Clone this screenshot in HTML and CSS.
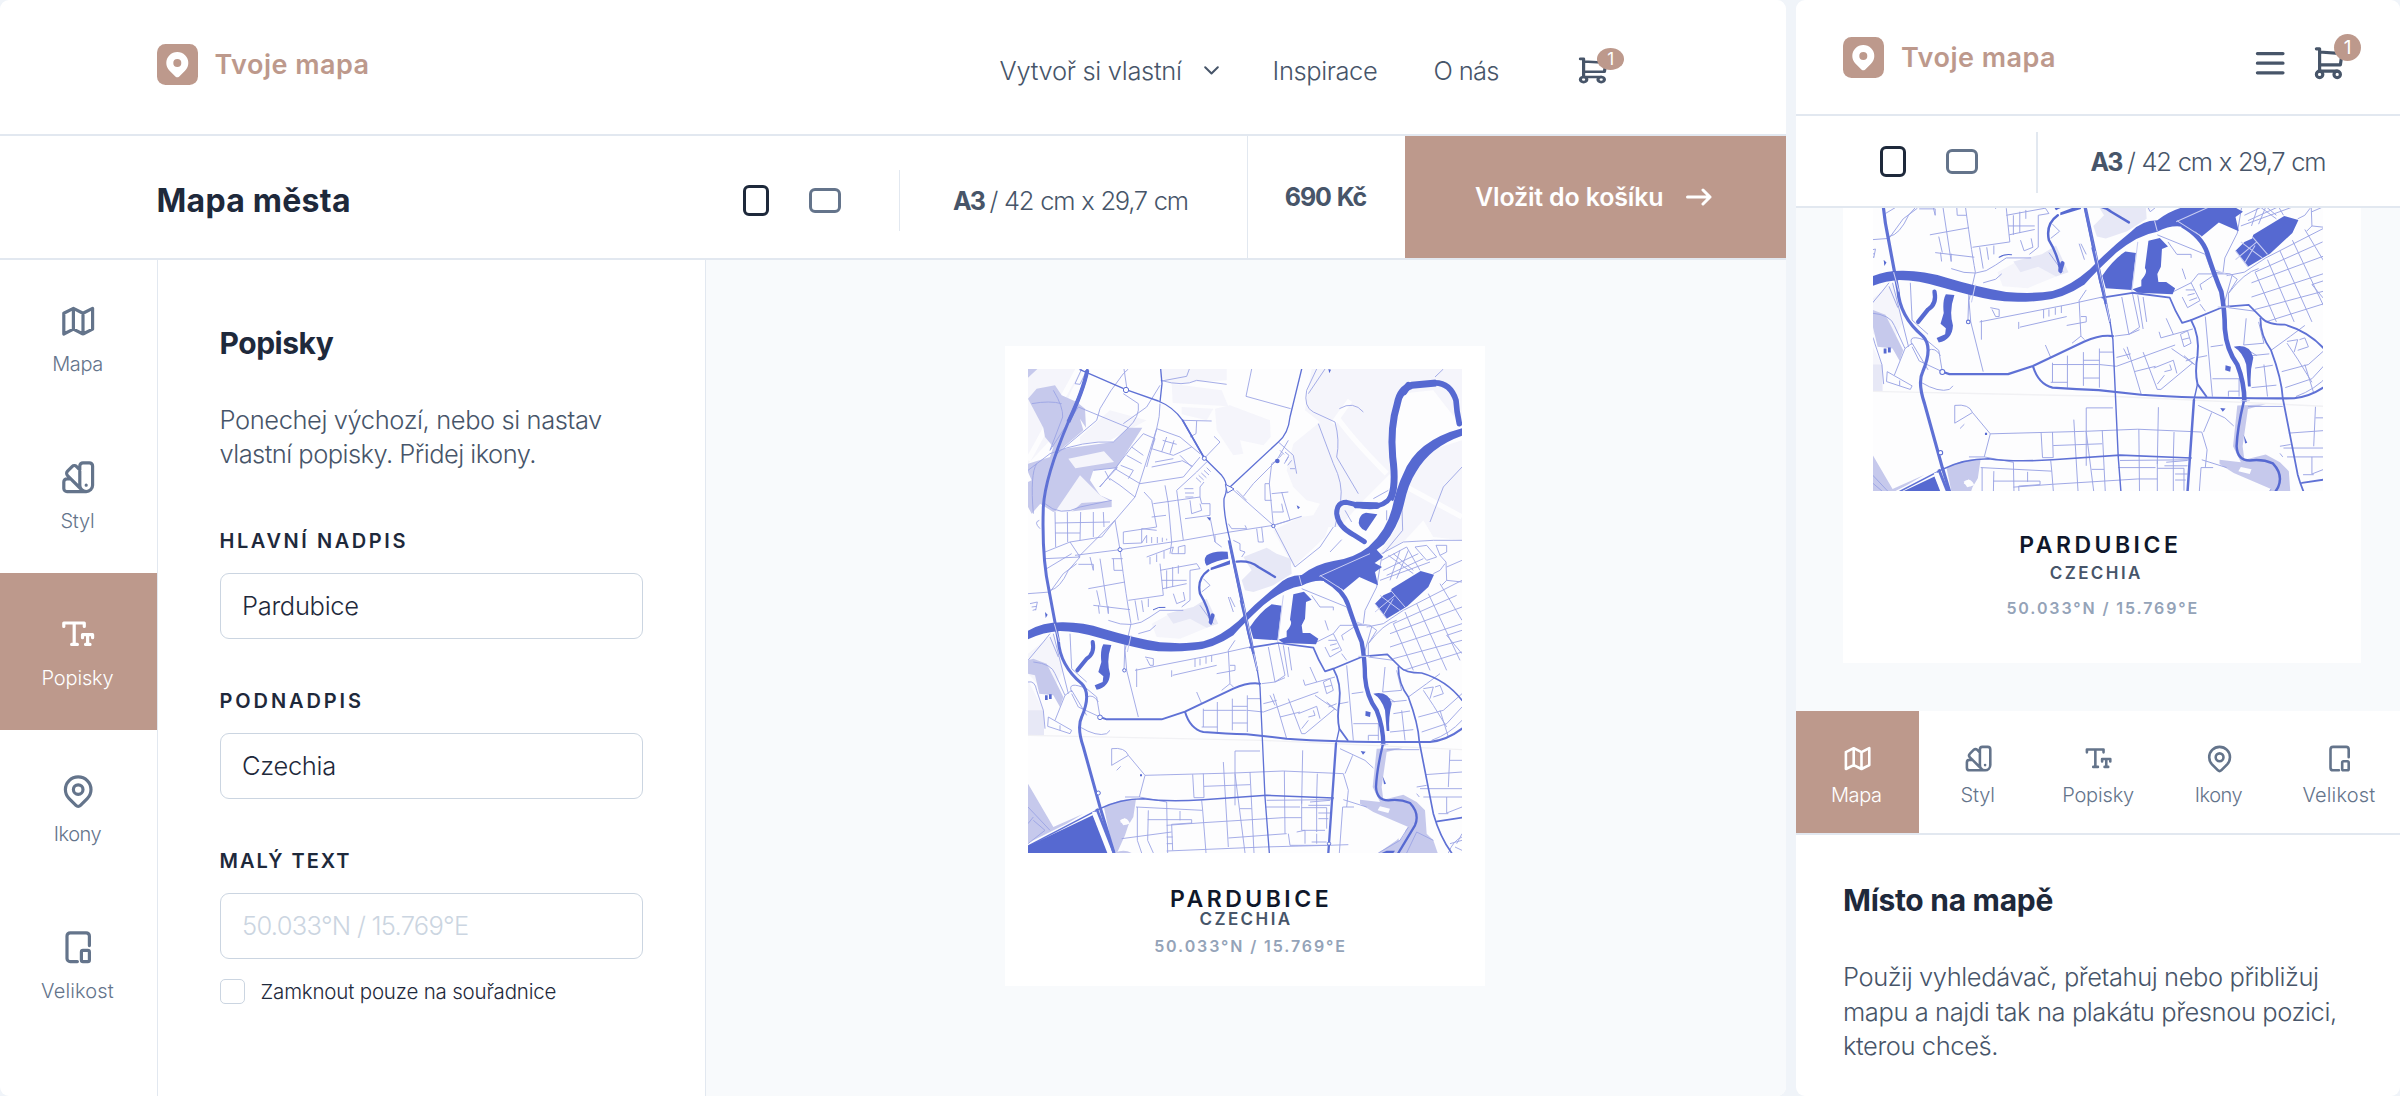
FILE: index.html
```html
<!DOCTYPE html>
<html lang="cs">
<head>
<meta charset="utf-8">
<title>Tvoje mapa</title>
<link rel="stylesheet" href="styles.css">
</head>
<body>
<svg class="defs" width="0" height="0" aria-hidden="true">
  <symbol id="i-logo" viewBox="0 0 41 41"><rect width="41" height="41" rx="8.5" fill="#bd998c"/><path fill="#fff" fill-rule="evenodd" d="M18.6 32.7 12.6 26.8A11 11 0 1 1 28 26.8L22 32.7Q20.3 34 18.6 32.7ZM20.3 15a4 4 0 1 0 0 8a4 4 0 1 0 0-8Z"/></symbol>
  <symbol id="i-map" viewBox="0 0 24 24"><path d="M3 7l6-3 6 3 6-3v13l-6 3-6-3-6 3V7M9 4v13M15 7v13"/></symbol>
  <symbol id="i-style" viewBox="0 0 24 24"><path d="M19 3h-4a2 2 0 0 0-2 2v12a4 4 0 0 0 8 0V5a2 2 0 0 0-2-2M13 7.35l-2-2a2 2 0 0 0-2.828 0L5.344 8.178a2 2 0 0 0 0 2.828l9 9M7.3 13H5a2 2 0 0 0-2 2v4a2 2 0 0 0 2 2h12M17 17v.01"/></symbol>
  <symbol id="i-text" viewBox="0 0 24 24"><path d="M3 7.2V5h12.8v2.2M9.5 5v13.4M7.9 18.4h3.6M14.7 14.2V12.3h6.3v1.9M17.9 12.3v6.1M16.6 18.4h2.8"/></symbol>
  <symbol id="i-pin" viewBox="0 0 24 24"><circle cx="12" cy="11" r="3"/><path d="M17.657 16.657l-4.243 4.243a2 2 0 0 1-2.827 0l-4.244-4.243a8 8 0 1 1 11.314 0z"/></symbol>
  <symbol id="i-size" viewBox="0 0 24 24"><path d="M19 11V5a2 2 0 0 0-2-2H7a2 2 0 0 0-2 2v14a2 2 0 0 0 2 2h4.500M15 14h3a1 1 0 0 1 1 1v5a1 1 0 0 1-1 1h-3a1 1 0 0 1-1-1v-5a1 1 0 0 1 1-1z"/></symbol>
  <symbol id="i-cart" viewBox="0 0 24 24" preserveAspectRatio="none"><circle cx="6" cy="19" r="2"/><circle cx="17" cy="19" r="2"/><path d="M17 17H6V3H4M6 5l14 1-1 7H6"/></symbol>
  <symbol id="i-menu" viewBox="0 0 24 24"><path d="M4 6h16M4 12h16M4 18h16"/></symbol>

  <symbol id="city" viewBox="84 86 1302 1452" preserveAspectRatio="none" overflow="visible">
    <rect x="84" y="86" width="1302" height="1452" fill="#fdfdfe"/>
    <g fill="#f5f5fb">
      <path d="M84 86H250L215 150L150 300L84 370Z"/>
      <path d="M515 130L680 120V86H480V110ZM515 130L665 150L685 198L518 188ZM645 205L690 195L810 240L812 290L790 315L720 300L730 340L700 345L650 270Z"/>
      <path d="M545 200L640 205L620 240L545 222Z"/>
      <path d="M935 86H1386V260L1300 150L1200 160L1170 300V400L1080 490L1020 560L985 560L975 590L880 680L820 570L900 530L940 525L960 490L920 480L880 440L860 390L880 310L960 245L915 210Z"/>
      <path d="M1386 300V600L1300 590L1270 540L1215 600L1130 650L1190 560L1230 400L1290 330Z"/>
      <path d="M84 940L160 880L190 990L150 1070L84 1000ZM240 290L330 210L440 240L330 300L240 310ZM84 1020L130 1110V1180H84Z"/>
      <path d="M455 850L520 815L620 790L650 850L540 895L470 890Z"/>
    </g>
    <path d="M1010 230Q1060 300 1160 400M1220 440L1386 530M84 360L235 86M1000 250L1050 180" fill="none" stroke="#fdfdfe" stroke-width="16"/>
    <g fill="#c6c9ec">
      <path d="M84 86H112L84 112ZM84 175L110 145L165 135L185 165L230 185L255 205L258 262L240 235L250 270L180 330L150 400L180 480L240 405L300 465L335 480V500L200 515L165 515L130 480L95 520L84 500V425L95 420L84 395V370L150 350L160 320L135 290L130 262Z"/>
      <path d="M160 330L340 305L385 262L427 262L350 382L280 390L270 420L300 465L220 480L160 515L120 490Z"/>
      <path d="M84 960L100 955L140 970L165 1020L190 1070L180 1100L160 1065L118 1060L105 1005L84 1000Z"/>
      <path d="M84 1330L160 1460L250 1420L200 1450L84 1508ZM312 1402Q350 1375 408 1375L400 1430L385 1455L375 1485L352 1536H340ZM375 1433l-15 12 20 8ZM345 1538Q370 1525 395 1538Z"/>
      <path d="M1130 1225L1210 1222L1160 1235L1145 1340L1150 1378L1210 1363L1250 1385L1275 1410L1280 1480L1300 1500L1313 1538H1135L1190 1500L1225 1460L1120 1415L1080 1390V1378L1140 1385L1118 1340Z"/>
    </g>
    <path d="M205 355L312 333L342 365L226 384ZM165 515L240 405L300 465L330 482L245 488L215 515Z" fill="#f5f5fb"/>
    <path d="M1140 1398L1170 1405L1165 1418L1133 1410ZM1215 1457q8 20-18 45l-3-12ZM360 1440q20-15 30 10l-20 5Z" fill="#fdfdfe"/>
    <g fill="#e7e8f6">
      <path d="M730 650L800 622L830 640L872 655L875 700L820 735L760 755L735 750L725 720L755 690Z"/>
      <path d="M500 820L580 800L620 775L655 850L620 862L570 835L520 850ZM84 1110H132V1185H84Z"/>
    </g>

    <!-- streets -->
    <g fill="none" stroke="#9ba4e4" stroke-width="2.700" stroke-linejoin="round">
      <path d="M245 86L225 130L240 132L262 86M160 150Q190 200 188 230L150 330M95 190Q150 180 185 190M290 240L300 205Q330 150 370 100L385 86M372 86L380 140M370 160L415 190Q420 230 385 262L235 200L150 330M480 135L440 200L370 250M84 390L150 340Q250 300 340 305L385 262M290 240L165 345M100 520Q90 400 110 370M135 490Q180 530 240 500L335 480"/>
      <path d="M482 120Q550 140 590 120L680 132M568 86L560 108L485 122M755 86L738 168L872 205M950 86L920 150Q910 200 940 215L1005 245Q1020 300 1010 350L1075 460M955 250L1000 370Q1030 430 1022 480M1018 205Q1060 180 1090 215M975 86L925 160M1330 86L1305 110M1386 380L1330 440L1290 545M1120 475L1165 450"/>
      <path d="M480 190Q480 230 470 265L415 440L405 470L345 540L235 650M470 265L540 290L600 340M470 265L455 325L440 380M430 280L465 295L455 325L520 345L575 320M430 280L395 320L345 385L300 440M345 385L420 430L550 410L600 350M405 470L360 435L330 415M395 320L430 345M380 345L425 370M362 375L400 390L385 415M500 290L485 335M522 300L510 340M488 300L530 312M545 362L455 380M540 345L575 380M465 365L520 355M550 240L635 242M590 242L588 280L570 290M615 352L660 305L642 288M280 390L352 382L298 440M315 392L330 420"/>
      <path d="M432 455L455 480L470 560L370 575V610L425 608V565L470 570M460 490L530 480L600 470V440L612 425M495 435L505 490L515 605M530 450L550 600M455 530L498 525M553 445H580M555 458H582M556 470H580M570 480L575 520L605 510L600 490M555 535L630 525V490H605L600 470M530 450L590 395L620 365M588 412l15 14M596 405l15 14M604 398l15 14M612 390l15 14M620 382l12 12M545 360L578 378M630 530L645 605L665 620M645 605V585"/>
      <path d="M165 515L167 620M202 515L203 605M242 515L240 600M280 515V590M310 515L312 560M165 548L330 545M165 578H240M135 635L210 605L305 590L345 540M135 655L240 650L205 690Q180 745 150 750M210 605L240 650M140 685L215 640M84 760L150 755L190 700L230 670M118 540Q100 545 120 565M345 540L360 628Q380 780 393 850L375 930L380 990L415 1130M225 645L360 628L550 600L690 575L820 555L905 528M425 608L440 585V608M455 590V608M472 590V608M487 592V605M500 595V600"/>
      <path d="M235 672H280V690L270 650M300 655L325 820M335 655H368M340 655L342 690H368M265 745L375 725M280 795L390 808M295 795L298 820M325 820V798M385 780L490 765L480 670M440 650L520 620L515 640H555V615L535 620V640M450 650V672M470 642V665M492 632V655M515 605L510 640M480 690L590 670L600 685L570 690V780L545 800M485 720H560M488 745L560 730M500 690V745M518 680V740M535 675V700M405 780L415 840M425 780L430 815M445 775V800M520 760L530 790L555 780L550 755M325 840Q400 870 450 830L480 810L550 810M415 880L450 870L467 855M290 750L300 795"/>
      <path d="M610 715L630 735L605 755M685 550L695 565H740L735 555M700 600L720 610V630L735 635L725 650M770 565L775 605H790L785 560M600 795L640 850M685 770L700 815M690 770L705 800"/>
      <path d="M690 440L820 555L885 680M730 468L760 430L830 360M830 360L815 370L808 430L820 555M808 430H795V480H815M815 460L865 455M845 455L870 540L820 555M818 515H850L845 490M835 305L880 345L890 400M840 330l12 12M848 340l-10 12M855 335l12 10-10 18M865 350l-12 20M875 360l-12 15M870 385h15M865 300L830 360M710 450L740 480"/>
      <path d="M885 680L960 620L1000 560M990 635L1025 598M1022 480L1005 560M1205 470L1208 570L1150 640M1145 640L1210 605L1300 600L1386 600M1035 510L1055 545M1160 510V540"/>
      <path d="M1145 660L1220 620L1260 690M1165 645L1240 700M1150 690L1255 640M1160 705L1270 655M1140 720L1290 665M1180 640L1240 690M1200 630L1170 720M1225 630L1190 715M1245 620L1280 615L1310 650L1280 660ZM1308 615H1340V635L1320 645ZM1320 645L1338 665L1340 720L1325 735M1386 660L1340 680M1145 650L1130 740L1095 810L1090 850M1300 700L1320 690L1335 670"/>
      <path d="M1210 810L1386 720M1180 850L1370 765M1170 880L1386 800M1170 920L1386 850M1180 955L1386 900M1210 990L1386 935M1180 850L1240 990M1215 815L1290 990M1250 790L1340 990M1285 760L1380 960M1320 730L1386 840M1386 725L1340 720M1386 940L1340 885L1386 870M1100 860L1150 850L1210 810M1105 910Q1150 850 1190 840M1060 850L1110 855L1130 870L1105 910V950L1180 960M1115 860L1090 950"/>
      <path d="M905 745L1040 800L1062 860L1025 885L1030 900M935 765L960 800L1000 800V810M975 840L985 870M950 905L1000 880L1025 930L990 950L975 920M1000 880L1020 855L1100 855M1025 940L1040 960M985 900l25 0M990 915l20-5M995 930l22-8"/>
      <path d="M405 990L660 940L750 920M440 955L450 975H460V955L435 950M518 1005L650 975M585 955V980M600 955V975M618 950V970M635 945V965M515 990V1010M705 900L685 930L690 1030L665 1050M650 1000L705 990V975H690M690 1030L700 1040M410 985V1040M375 900L372 990"/>
      <path d="M805 920L825 1025M835 910L855 1005L825 1025M850 915L865 1010M865 920L875 990M785 1030L825 1025L855 1012M590 1055L605 1090M610 1105V1160M652 1085V1175M697 1075V1170M742 1065V1175M610 1110H740M697 1098H742M742 1075H780M605 1160H652M697 1148H742M742 1110L790 1115L955 1055M820 1060L860 1195M790 1090L830 1080M810 1065L825 1095M840 1130L900 1115M865 1075L905 1180L915 1180L1005 1105M895 1120L950 1098L960 1135M905 1165L925 1140M925 1130L945 1125L940 1110M910 1018L915 1035L1005 1010M930 980L950 1025M970 1025L990 1015L1000 1050L980 1060ZM975 1040L995 1035M980 1085L1010 1110M985 1100L1010 1090M945 1065L1010 1110"/>
      <path d="M1040 975L1060 1200M1055 1060L1090 1055M1060 1150H1135V1200M1105 1200V1185H1135M1020 1090L1045 1085M1155 980L1148 1055L1205 1050M1170 1085L1220 1080M1180 1120L1230 1112M1170 1175L1240 1168M1205 1110L1215 1200M1145 1060L1185 1085M1190 990L1205 1050M1295 1200Q1350 1180 1386 1140M1255 1130L1330 1110L1386 1060M1225 1070L1280 1030L1320 1000M1265 1175L1340 1150L1386 1100M1270 1050L1300 1095L1340 1160M1270 1045L1300 1040L1290 1075M1305 1040L1320 1035L1330 1060L1300 1070M1320 1110L1345 1190"/>
      <path d="M84 960L130 905L150 880M100 965Q155 970 165 1000L195 1065L165 1140M150 890L175 950M84 1025Q105 1020 110 1050L130 1110L135 1165M145 1130L215 1170L210 1180L143 1158ZM195 1065L215 1050L260 1125M215 1055Q200 1020 260 1045L290 1070L300 1130M260 1070Q280 1060 295 1085M215 1060L235 1100L300 1130M240 1160Q290 1190 320 1180L330 1170M210 880L215 985L260 1025M160 880L205 1060M180 1155V1170"/>
      <path d="M335 1225Q375 1220 385 1245L435 1305L418 1370L375 1370M335 1225V1275L385 1245M350 1290L362 1278M435 1305L700 1298L850 1292L1030 1300L1045 1350L1040 1400M418 1370L500 1385M578 1302L582 1372H612L610 1300M612 1338L750 1333M670 1265L685 1520M705 1395V1232H780M705 1300L735 1538M750 1295L762 1538M853 1292L855 1480M908 1230L905 1390M952 1300L950 1370M1020 1225L1095 1260L1120 1283M1058 1245L1035 1300"/>
      <path d="M408 1400L608 1410L605 1380M412 1400V1500L425 1538M445 1410L443 1500L460 1538M500 1385L503 1538M540 1412V1440M443 1438H575V1448L515 1452L518 1530M365 1495L515 1475M500 1455L610 1447L850 1432H905M608 1410L618 1538M720 1405H755M685 1493L860 1480M795 1400H900M800 1380L1000 1378M865 1480L870 1515H980M905 1380V1470H975M925 1395H990M930 1385L990 1380M905 1402H980V1465M950 1370V1475M955 1418H990M955 1435H985M890 1475L915 1470V1510M935 1505H980M950 1480V1510M500 1532L790 1520L985 1515L1045 1513M518 1490H500M518 1510H500M1028 1400L1018 1538M1028 1400H1062M1030 1378L1100 1400"/>
      <path d="M1160 1228H1258M1260 1345H1386M1270 1370H1386M1275 1303L1386 1295M1350 1228L1345 1340M1350 1260H1386M1340 1370V1418L1386 1400M1315 1420H1345M1250 1340L1280 1335M1250 1360l8 10M1250 1475L1220 1538M1250 1475L1300 1500M1225 1460L1200 1500L1135 1538M1345 1538Q1360 1500 1386 1490M1365 1520L1386 1530M1350 1510L1386 1500M1386 1480L1370 1510M90 790l22-5-5 25M95 800l15-2M98 810l10-3M100 1440L135 1470L84 1510M84 1400L150 1470M84 1450L100 1430"/>
    </g>
    <path d="M84 1185L790 1200L1386 1228" fill="none" stroke="#f1f1f4" stroke-width="4"/>

    <!-- main roads -->
    <g fill="none" stroke="#5f71d5" stroke-linejoin="round" stroke-linecap="round">
      <path stroke-width="4" d="M240 88L378 148L475 182Q520 200 548 240L612 352L665 405Q690 435 672 475Q670 520 690 600L755 900L772 990L780 1040L795 1370L808 1538M905 86L870 230Q865 280 835 305L690 440M482 86L486 130L480 185"/>
      <path stroke-width="5.500" d="M690 615L745 880L772 990M548 240L612 352"/>
      <path stroke-width="5" d="M750 922L835 908L940 922Q955 960 975 993L1000 985L1090 948L1162 942L1200 980Q1215 998 1265 998Q1340 1020 1386 1080"/>
      <path stroke-width="5.500" d="M1000 985Q1025 1030 1018 1085Q1010 1130 1018 1165L1043 1200"/>
      <path stroke-width="5" d="M1195 980Q1195 1030 1225 1070Q1255 1150 1258 1205L1300 1420Q1320 1490 1355 1538M1312 1443L1386 1432"/>
      <path stroke-width="6" d="M300 1130L320 1137H485L555 1114L700 1045Q745 1025 780 1030M555 1114Q570 1165 610 1175Q680 1180 740 1182L860 1195Q1000 1206 1290 1205Q1340 1200 1386 1165"/>
      <path stroke-width="4.500" d="M84 1517L300 1405Q360 1375 430 1375Q500 1385 610 1378L800 1365L1000 1373"/>
      <path stroke-width="7" d="M1008 1210L985 1538"/>
      <path stroke-width="4" d="M1018 1165L1008 1210"/>
      <path stroke-width="9" d="M262 90Q250 150 205 245Q135 410 130 500Q125 650 147 750L175 900Q180 975 245 1030Q275 1060 245 1130Q230 1160 250 1220L300 1400L342 1538"/>
    </g>
    <path d="M262 90Q250 150 205 245" fill="none" stroke="#5f71d5" stroke-width="12"/>
    <g fill="#fdfdfe" stroke="#5f71d5" stroke-width="3">
      <circle cx="378" cy="149" r="8"/><circle cx="613" cy="354" r="6"/><circle cx="300" cy="1131" r="7"/><circle cx="295" cy="1358" r="6"/><circle cx="360" cy="628" r="6"/><circle cx="820" cy="557" r="5"/><circle cx="373" cy="990" r="5"/><circle cx="987" cy="1510" r="5"/><path d="M676 432L692 440L702 446L682 458Z"/>
    </g>

    <!-- river, lakes and ponds -->
    <g fill="#5669d1">
      <path d="M84 871Q130 845 190 846Q250 846 310 865Q400 892 480 906Q560 912 610 903Q660 890 715 842Q770 785 830 737Q860 705 905 704Q945 672 1000 662Q1060 655 1105 620Q1160 570 1176 505Q1190 440 1210 400Q1250 300 1386 264V286Q1290 320 1248 395Q1225 430 1212 490Q1195 560 1152 612L1130 628L1150 650L1124 668L1146 680L1125 695L1134 735L1078 710L1030 750Q975 700 905 736Q850 745 790 795Q730 850 700 885Q640 925 580 930Q500 938 440 928Q380 916 300 893Q230 872 180 872Q130 875 84 897Z"/>
      <path d="M760 895L750 860Q780 815 815 792L845 796L833 900ZM880 762L912 754L935 778L918 785L915 835L905 855L908 878H930L955 895L948 912L850 908L835 898L860 890V872Q880 850 870 838Z"/>
      <path d="M1175 745L1262 692L1302 703L1285 740L1222 798L1160 835L1125 790L1150 765L1172 755Z"/>
      <path d="M1098 517L1132 522L1098 572Q1070 560 1078 535Q1084 519 1098 517ZM1120 1060Q1165 1050 1175 1090Q1165 1130 1168 1172H1160L1155 1110Q1145 1075 1120 1060Z"/>
      <path d="M84 1517L278 1425L322 1538H84Z"/>
      <path d="M620 645Q640 630 683 634L685 655Q650 660 620 676Q608 660 620 645ZM632 682L690 660V672L632 690Z"/>
      <path d="M310 912L334 914Q318 960 330 1000Q328 1040 290 1048L284 1035L308 1025L310 1008L295 995L304 965Q300 930 310 912ZM135 1065h8v14h-8zM147 1062h8v14h-8zM1097 1112l15 4-2 14-14-4zM1082 1232l15 2-8 9zM1148 1308l10 22-6 2zM1145 1538l15-7h25l-5 7zM985 86l8 2-5 11zM620 530l12 2-3 9zM135 815l8 8-6 10zM420 1302h6v6h-6zM890 495l10 6-6 6z"/>
      <circle cx="832" cy="362" r="7"/>
    </g>
    <g fill="none" stroke="#5669d1" stroke-linecap="round" stroke-linejoin="round">
      <path stroke-width="17" d="M1378 250Q1370 215 1368 180Q1350 125 1300 128"/>
      <path stroke-width="21" stroke-linecap="butt" d="M1308 128L1235 135Q1200 145 1192 190Q1170 260 1178 350Q1190 440 1170 478"/>
      <path stroke-width="15" d="M1172 470Q1150 505 1090 498L1040 486Q1010 485 1010 520Q1015 560 1060 583L1093 604"/>
      <path stroke-width="20" d="M1225 135L1212 155M1130 496L1070 494"/>
      <path stroke-width="7" d="M625 690Q590 715 600 760Q625 800 633 850M710 664Q750 660 775 680L825 710"/>
      <path stroke-width="12" d="M638 825L632 845"/>
      <path stroke-width="12" d="M278 905Q285 940 260 955L232 990"/>
      <path stroke-width="13" stroke-linecap="butt" d="M975 718Q1030 750 1045 795Q1070 870 1085 905Q1095 960 1095 1010Q1100 1070 1130 1110Q1150 1160 1150 1215"/>
      <path stroke-width="7" d="M1148 1215Q1130 1290 1128 1340Q1130 1380 1165 1380Q1200 1375 1230 1388Q1260 1420 1245 1455L1195 1538"/>
      <path stroke-width="3" d="M460 808Q475 798 495 801"/>
    </g>
    <path d="M730 790L772 990M960 705L1030 750M850 765L833 905M897 705L905 735M163 850L178 905M393 885L382 935M1125 790L1160 835M1140 765L1200 810M1125 815L1185 765M1172 750L1215 800M1150 825L1180 775M958 708L1110 640M1075 948H1110M1140 1212H1165M1110 860L1070 845" fill="none" stroke="#c9cdf2" stroke-width="3"/>
    <path d="M280 1415L330 1538" fill="none" stroke="#fdfdfe" stroke-width="9"/>
    <path d="M290 1405L342 1538" fill="none" stroke="#5f71d5" stroke-width="8"/>
    <path d="M686 600L745 880M722 780L760 940" fill="none" stroke="#5f71d5" stroke-width="6"/>
  </symbol>
</svg>

<main class="frame desktop">
  <header class="header">
    <a class="logo"><svg class="logo-mark"><use href="#i-logo"/></svg><span class="brand">Tvoje mapa</span></a>
    <nav class="nav">
      <a class="n1">Vytvoř si vlastní <svg class="chevron" viewBox="0 0 15 9"><path d="M1.200 1.200 7.500 7.500l6.300-6.300"/></svg></a>
      <a class="n2">Inspirace</a>
      <a class="n3">O nás</a>
    </nav>
    <span class="cart"><svg class="ico"><use href="#i-cart"/></svg><b class="badge">1</b></span>
  </header>
  <div class="toolbar">
    <h1 class="heading">Mapa města</h1>
    <div class="orient"><i class="portrait"></i><i class="landscape"></i></div>
    <i class="sep"></i>
    <div class="size"><b class="a3">A3</b><span class="dims">/ 42 cm x 29,7 cm</span></div>
    <strong class="price">690 Kč</strong>
    <button class="buy"><span class="buy-text">Vložit do košíku</span><svg class="arrow" viewBox="0 0 26 18"><path d="M1.500 9H24M17 2l7 7-7 7"/></svg></button>
  </div>
  <div class="work">
    <nav class="side">
      <a class="item"><svg class="ico"><use href="#i-map"/></svg><span class="t1">Mapa</span></a>
      <a class="item"><svg class="ico"><use href="#i-style"/></svg><span class="t2">Styl</span></a>
      <a class="item active"><svg class="ico"><use href="#i-text"/></svg><span class="t3">Popisky</span></a>
      <a class="item"><svg class="ico"><use href="#i-pin"/></svg><span class="t4">Ikony</span></a>
      <a class="item"><svg class="ico"><use href="#i-size"/></svg><span class="t5">Velikost</span></a>
    </nav>
    <section class="panel">
      <h2 class="title title-popisky">Popisky</h2>
      <p class="lead">Ponechej výchozí, nebo si nastav<br><span class="lead-2">vlastní popisky. Přidej ikony.</span></p>
      <div class="field"><label class="label l1">HLAVNÍ NADPIS</label><div class="input">Pardubice</div></div>
      <div class="field"><label class="label l2">PODNADPIS</label><div class="input">Czechia</div></div>
      <div class="field"><label class="label l3">MALÝ TEXT</label><div class="input placeholder">50.033°N / 15.769°E</div></div>
      <div class="check"><i class="box"></i><span>Zamknout pouze na souřadnice</span></div>
    </section>
    <section class="canvas">
      <article class="poster">
        <svg class="poster-map"><use href="#city"/></svg>
        <div class="city">PARDUBICE</div>
        <div class="country">CZECHIA</div>
        <div class="coords">50.033°N / 15.769°E</div>
      </article>
    </section>
  </div>
</main>

<main class="frame mobile">
  <header class="header">
    <a class="logo"><svg class="logo-mark"><use href="#i-logo"/></svg><span class="brand">Tvoje mapa</span></a>
    <svg class="ico menu"><use href="#i-menu"/></svg>
    <span class="cart"><svg class="ico"><use href="#i-cart"/></svg><b class="badge">1</b></span>
  </header>
  <div class="toolbar">
    <div class="orient"><i class="portrait"></i><i class="landscape"></i></div>
    <i class="sep"></i>
    <div class="size"><b class="a3">A3</b><span class="dims">/ 42 cm x 29,7 cm</span></div>
  </div>
  <section class="canvas">
    <article class="poster">
      <svg class="poster-map" viewBox="105 669.500 1265 795.500" preserveAspectRatio="none"><use href="#city" x="84" y="86" width="1302" height="1452"/></svg>
      <div class="city">PARDUBICE</div>
      <div class="country">CZECHIA</div>
      <div class="coords">50.033°N / 15.769°E</div>
    </article>
  </section>
  <nav class="tabs">
    <a class="item active"><svg class="ico"><use href="#i-map"/></svg><span class="t1">Mapa</span></a>
    <a class="item"><svg class="ico"><use href="#i-style"/></svg><span class="t2">Styl</span></a>
    <a class="item"><svg class="ico"><use href="#i-text"/></svg><span class="t3">Popisky</span></a>
    <a class="item"><svg class="ico"><use href="#i-pin"/></svg><span class="t4">Ikony</span></a>
    <a class="item"><svg class="ico"><use href="#i-size"/></svg><span class="t5">Velikost</span></a>
  </nav>
  <section class="panel">
    <h2 class="title">Místo na mapě</h2>
    <p class="lead">Použij vyhledávač, přetahuj nebo přibližuj<br>mapu a najdi tak na plakátu přesnou pozici,<br>kterou chceš.</p>
  </section>
</main>
</body>
</html>
```
FILE: styles.css
```css
* { box-sizing: border-box; margin: 0; padding: 0; }
body {
  width: 2400px; height: 1096px; overflow: hidden;
  display: flex; gap: 10px;
  background: #f0f4f9;
  font-family: Inter, "Liberation Sans", sans-serif;
  font-weight: 300;
  color: #475569;
  white-space: nowrap;
}
.defs { position: absolute; }
i { font-style: normal; }
.frame { height: 1096px; background: #fff; border-radius: 9px; overflow: hidden; display: flex; flex-direction: column; }
.desktop { width: 1786px; }
.mobile { width: 604px; }

.ico { display: block; width: 38.4px; height: 38.4px; fill: none; stroke: currentColor; stroke-width: 2; stroke-linecap: round; stroke-linejoin: round; flex: none; }

/* header */
.header { display: flex; align-items: flex-start; height: 136px; border-bottom: 2px solid #e2e8f0; padding: 0 174px 0 156.500px; flex: none; }
.logo { display: flex; gap: 17px; margin-top: 43.500px; margin-right: auto; color: #bd998c; }
.logo-mark { width: 41px; height: 41px; display: block; }
.brand { font-size: 27px; font-weight: 600; line-height: 42px; letter-spacing: .018em; }
.nav { display: flex; margin-top: 50.500px; font-size: 25.500px; line-height: 40px; }
.n1 { display: flex; letter-spacing: -.012em; width: 273px; }
.n2 { letter-spacing: -.016em; width: 161px; }
.n3 { letter-spacing: -.028em; width: 140px; }
.chevron { width: 15px; height: 9px; margin: 15px 0 0 22px; fill: none; stroke: currentColor; stroke-width: 2; stroke-linecap: round; stroke-linejoin: round; }
.cart { position: relative; margin-top: 55px; color: #475569; }
.cart .ico { height: 31px; }
.badge { position: absolute; left: 23.500px; top: -7px; width: 27px; height: 21.500px; border-radius: 50%; background: #bd998c; color: #fff; font-size: 17px; font-weight: 400; line-height: 22px; text-align: center; }

/* toolbar */
.toolbar { display: flex; height: 124px; border-bottom: 2px solid #e2e8f0; flex: none; }
.heading { width: 586px; margin-left: 156.500px; font-size: 32px; font-weight: 700; letter-spacing: .008em; line-height: 130px; color: #1e293b; }
.orient { display: flex; align-items: center; gap: 40px; padding-top: 7px; }
.portrait { width: 26px; height: 31px; border: 3px solid #1e293b; border-radius: 6px; }
.landscape { width: 32px; height: 25px; border: 3px solid #64748b; border-radius: 6px; }
.sep { width: 1.500px; height: 61px; margin: 34px 0 0 58px; background: #e2e8f0; }
.size { display: flex; width: 348px; padding-left: 53px; font-size: 25.500px; line-height: 130px; border-right: 1.500px solid #e2e8f0; }
.a3 { width: 36.500px; font-size: 25px; letter-spacing: -.08em; font-weight: 700; }
.dims { letter-spacing: -.049em; word-spacing: .04em; }
.price { flex: 1; padding-right: 2px; text-align: center; font-size: 25px; font-weight: 700; line-height: 122px; letter-spacing: -.048em; word-spacing: .06em; }
.buy { display: flex; align-items: center; width: 381px; border: 0; padding-left: 70px; background: #bd998c; color: #fff; font: inherit; }
.buy-text { font-size: 25px; font-weight: 600; letter-spacing: -.007em; line-height: 122px; width: 211px; text-align: left; }
.arrow { width: 26px; height: 18px; fill: none; stroke: #fff; stroke-width: 3; stroke-linecap: round; stroke-linejoin: round; }

/* workspace */
.work { display: flex; flex: 1; min-height: 0; }
.side { width: 158px; border-right: 1.500px solid #e2e8f0; }
.item { display: flex; flex-direction: column; align-items: center; color: #64748b; font-size: 20px; line-height: 24px; }
.item span { margin-right: 2px; }
.side .item { height: 156.700px; padding-top: 41.500px; gap: 12.500px; }
.item.active { background: #bd998c; color: #fff; }
.t1, .t4 { letter-spacing: -.022em; }
.t2, .t3 { letter-spacing: -.008em; }
.t5 { letter-spacing: .007em; }
.desktop .panel { width: 548px; padding: 62.500px 62px 0 61.500px; border-right: 1.500px solid #e2e8f0; }
.title { font-size: 30px; font-weight: 700; line-height: 40px; letter-spacing: -.01em; color: #1e293b; }
.title-popisky { letter-spacing: -.016em; }
.lead { margin-top: 40px; font-size: 25.500px; line-height: 34.500px; letter-spacing: -.016em; }
.lead-2 { letter-spacing: -.021em; }
.field { margin-top: 49.500px; }
.lead + .field { margin-top: 57px; }
.label { display: block; font-size: 20px; font-weight: 600; line-height: 24px; color: #1e293b; }
.l1 { letter-spacing: .128em; }
.l2 { letter-spacing: .145em; }
.l3 { letter-spacing: .098em; }
.input { height: 66px; margin-top: 20.500px; border: 1.800px solid #cbd5e1; border-radius: 9px; padding-left: 21.500px; font-size: 25.500px; line-height: 64px; letter-spacing: -.012em; color: #1e293b; }
.placeholder { color: #cbd5e1; letter-spacing: -.028em; }
.check { display: flex; align-items: center; gap: 16px; margin-top: 20px; font-size: 20.500px; line-height: 25px; letter-spacing: -.009em; color: #1e293b; }
.box { width: 25px; height: 25px; border: 1.800px solid #cbd5e1; border-radius: 5px; }

/* poster preview */
.canvas { flex: 1; background: #f8fafc; display: flex; justify-content: center; align-items: flex-start; padding-right: 2px; }
.poster { width: 480px; height: 640px; margin-top: 85.500px; padding-top: 23.500px; background: #fff; text-align: center; }
.poster-map { display: block; width: 434px; height: 484px; margin: 0 auto 33.500px; overflow: hidden; }
.city { padding-left: 12px; font-size: 23px; font-weight: 600; line-height: 24px; letter-spacing: .152em; color: #0f172a; }
.country { padding-left: 2px; font-size: 17px; font-weight: 600; line-height: 16px; letter-spacing: .142em; color: #475569; }
.coords { margin-top: 9px; padding-left: 11px; font-size: 16px; font-weight: 600; line-height: 20px; letter-spacing: .118em; color: #94a3b8; }

/* narrow layout */
.mobile .header { height: 116px; padding: 0 51.500px 0 47px; }
.mobile .logo { margin-top: 37px; }
.mobile .menu { margin: 43.500px 21px 0 0; }
.mobile .cart { margin-top: 43.500px; }
.mobile .cart .ico { height: 38.400px; }
.mobile .badge { height: 27px; top: -9.500px; left: 24px; font-size: 19px; line-height: 27px; }
.mobile .toolbar { height: 92px; }
.mobile .orient { padding: 1px 0 0 84px; }
.mobile .sep { margin: 16px 0 0 58px; }
.mobile .size { border: 0; line-height: 92px; }
.mobile .canvas { flex: none; height: 502.500px; padding: 0 0 0 47px; justify-content: flex-start; }
.mobile .poster { width: 517.500px; height: 455px; margin: 0; padding: 0; }
.mobile .poster-map { width: 449.600px; height: 282.700px; margin: 0 0 42.500px 30px; }
.mobile .city { padding: 0 3px 0 0; }
.mobile .country { padding: 0 11px 0 0; margin-top: 7.500px; }
.mobile .coords { padding: 0 0 0 2px; margin-top: 17px; }
.tabs { display: grid; grid-template-columns: 122.500px repeat(4, 120.400px); height: 124.500px; border-bottom: 2px solid #e2e8f0; flex: none; }
.tabs .item { padding-top: 32.500px; gap: 8.500px; }
.tabs .ico { width: 31.200px; height: 31.200px; }
.mobile .panel { padding: 45px 0 0 47px; }
```
